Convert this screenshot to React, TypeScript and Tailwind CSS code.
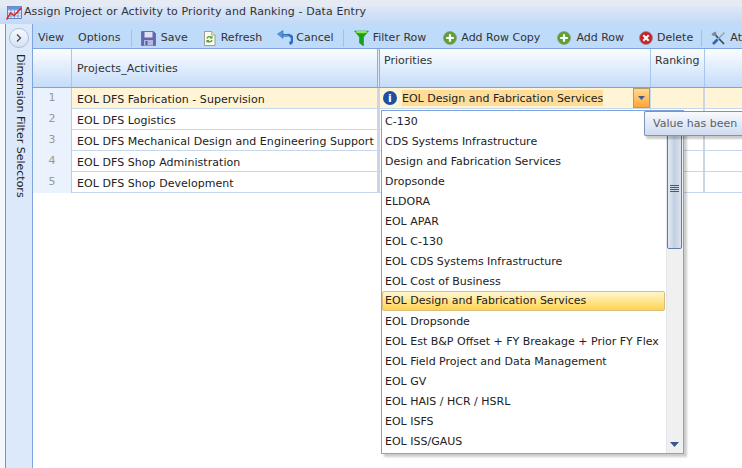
import type { ReactNode } from "react";

const rows = [
  "EOL DFS Fabrication - Supervision",
  "EOL DFS Logistics",
  "EOL DFS Mechanical Design and Engineering Support",
  "EOL DFS Shop Administration",
  "EOL DFS Shop Development",
];

const options = [
  "C-130",
  "CDS Systems Infrastructure",
  "Design and Fabrication Services",
  "Dropsonde",
  "ELDORA",
  "EOL APAR",
  "EOL C-130",
  "EOL CDS Systems Infrastructure",
  "EOL Cost of Business",
  "EOL Design and Fabrication Services",
  "EOL Dropsonde",
  "EOL Est B&P Offset + FY Breakage + Prior FY Flex",
  "EOL Field Project and Data Management",
  "EOL GV",
  "EOL HAIS / HCR / HSRL",
  "EOL ISFS",
  "EOL ISS/GAUS",
];

function ChartIcon() {
  return (
    <svg width="16" height="14" viewBox="0 0 16 14" className="shrink-0">
      <rect x="1.500" y="0.500" width="14" height="12" fill="#eaf2ff" stroke="#3f69b8" strokeWidth="0.800" />
      <rect x="1.500" y="0.500" width="14" height="3" fill="#6f94d8" />
      <path d="M1.500 4h14M1.500 7h14M1.500 10h14M5 1v12M8.500 1v12M12 1v12" stroke="#5f86cc" strokeWidth="0.700" />
      <path d="M0.500 13.500 L4.500 7 L8 9.500 L15.500 2" fill="none" stroke="#e3201b" strokeWidth="1.500" />
    </svg>
  );
}

function SaveIcon() {
  return (
    <svg width="15" height="15" viewBox="0 0 15 15" className="shrink-0">
      <path d="M0.500 0.500h12l2 2v12h-14z" fill="#6466ae" stroke="#50539a" strokeWidth="0.600" />
      <rect x="3.500" y="1" width="8" height="5.500" fill="#dfe2f2" />
      <rect x="3" y="9" width="9" height="5.500" fill="#b5b8de" />
      <rect x="4.500" y="10" width="2" height="4" fill="#55589f" />
    </svg>
  );
}

function RefreshIcon() {
  return (
    <svg width="13" height="15" viewBox="0 0 13 15" className="shrink-0">
      <path d="M1.500 0.500h7l3.500 3.500v10.500h-10.500z" fill="#fbfbf0" stroke="#8b8b78" strokeWidth="0.800" />
      <path d="M8.500 0.500v3.500h3.500" fill="#e5e5d0" stroke="#8b8b78" strokeWidth="0.600" />
      <path d="M4 7.500a2.600 2.600 0 0 1 4.500-1M9 9a2.600 2.600 0 0 1-4.500 1" fill="none" stroke="#4f9a2a" strokeWidth="1.300" />
      <path d="M9.500 4.500v3h-3zM3.500 12v-3h3z" fill="#4f9a2a" />
    </svg>
  );
}

function CancelIcon() {
  return (
    <svg width="16" height="16" viewBox="0 0 16 16" className="shrink-0">
      <path d="M4 5.500h6a4 4 0 0 1 2.500 8" fill="none" stroke="#2f6fc0" strokeWidth="3" />
      <path d="M5 6h5a3.500 3.500 0 0 1 2.500 6" fill="none" stroke="#9cc2ee" strokeWidth="1" />
      <path d="M0.500 4l5.500-3.500v8z" fill="#5b93d8" stroke="#2a62ad" strokeWidth="0.500" />
    </svg>
  );
}

function FilterIcon() {
  return (
    <svg width="15" height="16" viewBox="0 0 15 16" className="shrink-0">
      <path d="M0.500 1h14l-5 6v9l-4-3v-6z" fill="#16a01e" stroke="#128a1a" strokeWidth="0.500" />
      <ellipse cx="7.500" cy="2" rx="6" ry="1.300" fill="#8fe84e" />
    </svg>
  );
}

function PlusIcon() {
  return (
    <svg width="14" height="14" viewBox="0 0 14 14" className="shrink-0">
      <circle cx="7" cy="7" r="6.500" fill="#5ea132" stroke="#8a9a88" strokeWidth="0.700" />
      <path d="M7 3.200v7.600M3.200 7h7.600" stroke="#fff" strokeWidth="2.200" />
    </svg>
  );
}

function DeleteIcon() {
  return (
    <svg width="14" height="14" viewBox="0 0 14 14" className="shrink-0">
      <circle cx="7" cy="7" r="6.500" fill="#c3272b" stroke="#96888a" strokeWidth="0.700" />
      <path d="M4.300 4.300l5.400 5.400M9.700 4.300l-5.400 5.400" stroke="#fff" strokeWidth="2" />
    </svg>
  );
}

function ToolsIcon() {
  return (
    <svg width="15" height="15" viewBox="0 0 15 15" className="shrink-0">
      <path d="M3 2.500l10 10.500" stroke="#3f4a58" strokeWidth="1.800" />
      <path d="M0.500 3a3 3 0 0 0 4.500 1.500 3 3 0 0 0-1-4z" fill="#7f8a96" />
      <path d="M13.500 1.500l-7 7" stroke="#9aa4b0" strokeWidth="1.600" />
      <path d="M6.500 8.500l-4.500 4.500" stroke="#2d67b0" strokeWidth="2.600" />
    </svg>
  );
}

function Sep({ className }: { className: string }) {
  return <div className={`h-[17px] w-px bg-[#a3bfe2] ${className}`} />;
}

function ToolButton({ icon, label, className, gap }: { icon: ReactNode; label: string; className: string; gap: string }) {
  return (
    <div className={`flex shrink-0 items-center ${gap} ${className}`}>
      {icon}
      <span>{label}</span>
    </div>
  );
}

export default function App() {
  return (
    <div
      className="relative flex h-[468px] w-[742px] flex-col overflow-hidden bg-white text-[11px] text-[#222]"
      style={{ fontFamily: '"DejaVu Sans", Verdana, sans-serif' }}
    >
      <div className="flex h-[24px] items-center gap-[2px] bg-[linear-gradient(#e6ebf3_0,#e6ebf3_6px,#dbe7f8_7px,#c4d9f6_100%)] pl-[6px] pt-[1px] tracking-[0.1px] text-[#333]">
        <ChartIcon />
        <span className="whitespace-nowrap">Assign Project or Activity to Priority and Ranking - Data Entry</span>
      </div>

      <div className="flex min-h-0 flex-1">
        <div className="w-[6px] shrink-0 border-r border-[#6d94d0] bg-[#f4f7fb]" />

        <div className="flex w-[27px] shrink-0 flex-col items-center border-r border-[#7ea3de] bg-[#dce9fb]">
          <div className="mt-[4px] flex h-[20px] w-[20px] items-center justify-center rounded-full border border-[#aebfd8] bg-gradient-to-b from-[#f7fafe] to-[#d5e2f3]">
            <svg width="6" height="8" viewBox="0 0 6 8">
              <path d="M1 0.500l3.500 3.500-3.500 3.500" fill="none" stroke="#444" strokeWidth="1.200" />
            </svg>
          </div>
          <div className="ml-[2px] mt-[6px] whitespace-nowrap [writing-mode:vertical-rl]">Dimension Filter Selectors</div>
        </div>

        <div className="relative min-w-0 flex-1">
          <div className="flex h-[25px] items-center overflow-hidden whitespace-nowrap border-b border-[#7ea3de] bg-[#bfdbfa] pt-[4px] text-[#333]">
            <span className="ml-[5px]">View</span>
            <span className="ml-[14px]">Options</span>
            <Sep className="ml-[10px]" />
            <ToolButton icon={<SaveIcon />} label="Save" className="ml-[10px]" gap="gap-[5px]" />
            <ToolButton icon={<RefreshIcon />} label="Refresh" className="ml-[15px]" gap="gap-[5px]" />
            <ToolButton icon={<CancelIcon />} label="Cancel" className="ml-[15px]" gap="gap-[3px]" />
            <Sep className="ml-[9px]" />
            <ToolButton icon={<FilterIcon />} label="Filter Row" className="ml-[11px]" gap="gap-[4px]" />
            <ToolButton icon={<PlusIcon />} label="Add Row Copy" className="ml-[17px]" gap="gap-[4px]" />
            <ToolButton icon={<PlusIcon />} label="Add Row" className="ml-[17px]" gap="gap-[5px]" />
            <ToolButton icon={<DeleteIcon />} label="Delete" className="ml-[15px]" gap="gap-[4px]" />
            <Sep className="ml-[8px]" />
            <ToolButton icon={<ToolsIcon />} label="At" className="ml-[10px]" gap="gap-[4px]" />
          </div>

          <div className="grid h-[39px] grid-cols-[39px_305px_3px_271px_54px_1fr] border-b border-[#7ea3de] bg-gradient-to-b from-[#fbfdff] to-[#c5dcf9] text-[#333]">
            <div className="border-r border-[#a9c6ec]" />
            <div className="flex items-center pl-[5px] pt-[2px] tracking-[0.1px]">Projects_Activities</div>
            <div className="border-x border-[#8fb0de] bg-[#dfe9f6]" />
            <div className="border-r border-[#a9c6ec] pl-[4px] pt-[4px]">Priorities</div>
            <div className="border-r border-[#a9c6ec] pl-[4px] pt-[4px]">Ranking</div>
            <div />
          </div>

          {rows.map((name, i) => (
            <div
              key={name}
              className={`grid h-[21px] grid-cols-[39px_305px_3px_271px_54px_1fr] border-b border-[#c5d8f0] ${i === 0 ? "bg-[#fff4d6]" : "bg-white"}`}
            >
              <div className="flex items-center justify-center border-r border-[#b5cfee] bg-[#eaf2fd] text-[#999]">{i + 1}</div>
              <div className="flex items-center whitespace-nowrap pl-[5px] pt-[4px] tracking-[0.05px]">{name}</div>
              <div className="bg-[#ccd5e3]" />
              {i === 0 ? (
                <div className="flex items-center justify-between border-r border-[#c5d8f0] pl-[3px]">
                  <div className="flex items-center gap-[5px]">
                    <span className="flex h-[14px] w-[14px] items-center justify-center rounded-full bg-[#1f4fa3] text-[11px] font-bold leading-none text-white">i</span>
                    <span className="bg-[#ffdd99] pt-[1px] leading-[15px]">EOL Design and Fabrication Services</span>
                  </div>
                  <div className="flex h-[20px] w-[17px] items-center justify-center border border-[#b89b5e] bg-gradient-to-b from-[#ffd98a] to-[#ffa62e]">
                    <svg width="7" height="4" viewBox="0 0 7 4">
                      <path d="M0 0h7l-3.500 4z" fill="#3f5a8f" />
                    </svg>
                  </div>
                </div>
              ) : (
                <div className="border-r border-[#c5d8f0]" />
              )}
              <div className="border-r-2 border-[#ccd5e3]" />
              <div />
            </div>
          ))}

          <div className="absolute left-[348px] top-[86px] h-[344px] w-[303px] border border-[#7ea3de] bg-white shadow-[3px_3px_2px_rgba(0,0,0,0.2)]">
            <div>
              {options.map((o) => (
                <div
                  key={o}
                  className={
                    o === "EOL Design and Fabrication Services"
                      ? "flex h-[20px] w-[283px] items-center whitespace-nowrap rounded-[2px] border border-[#d9bd7a] bg-gradient-to-b from-[#fff6cf] via-[#ffe58f] to-[#ffd24f] pl-[2px] pt-[1px]"
                      : "flex h-[20px] items-center whitespace-nowrap pl-[3px] pt-[2px]"
                  }
                >
                  {o}
                </div>
              ))}
            </div>
            <div className="absolute bottom-0 right-0 top-0 w-[17px] border-l border-[#e3e6ea] bg-[#f0f0f0]">
              <div className="absolute left-0 top-[17px] flex h-[121px] w-[15px] items-center justify-center rounded-[2px] border border-[#5f7ba8] bg-gradient-to-r from-[#e3e9f2] via-[#c3d0e2] to-[#dbe3ee]">
                <div className="h-[7px] w-[9px] bg-[linear-gradient(#556_1px,transparent_1px)] bg-[length:9px_2px]" />
              </div>
              <svg width="9" height="5" viewBox="0 0 9 5" className="absolute bottom-[6px] left-[3px]">
                <path d="M0 0h9l-4.500 5z" fill="#3d5488" />
              </svg>
            </div>
          </div>

          <div className="absolute left-[611px] top-[87px] h-[25px] w-[120px] whitespace-nowrap rounded-l-[2px] border-y border-l border-[#7d94b8] bg-gradient-to-b from-[#f8fafd] to-[#cfdcf0] pl-[8px] leading-[23px] text-[#5a6068] shadow-[2px_3px_2px_rgba(0,0,0,0.2)]">
            Value has been
          </div>
        </div>
      </div>
    </div>
  );
}
